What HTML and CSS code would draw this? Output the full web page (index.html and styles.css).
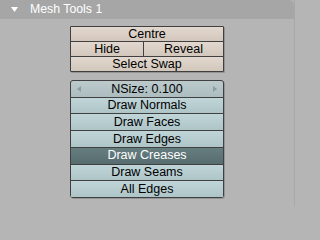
FILE: index.html
```html
<!DOCTYPE html>
<html>
<head>
<meta charset="utf-8">
<link rel="stylesheet" href="styles.css">
</head>
<body>
<div class="panel">
  <div class="header">
    <svg class="tri" width="7" height="5" viewBox="0 0 7 5"><polygon points="0,0 7,0 3.5,5" fill="#fff"/></svg>
    <span class="title">Mesh Tools 1</span>
  </div>
  <div class="content">
    <div class="group g1">
      <div class="row"><div class="btn beige">Centre</div></div>
      <div class="row split"><div class="btn beige">Hide</div><div class="btn beige">Reveal</div></div>
      <div class="row"><div class="btn beige">Select Swap</div></div>
    </div>
    <div class="group g2">
      <div class="row"><div class="btn num"><span class="arr l"></span>NSize: 0.100<span class="arr r"></span></div></div>
      <div class="row"><div class="btn blue">Draw Normals</div></div>
      <div class="row"><div class="btn blue">Draw Faces</div></div>
      <div class="row"><div class="btn blue">Draw Edges</div></div>
      <div class="row"><div class="btn dark">Draw Creases</div></div>
      <div class="row"><div class="btn blue">Draw Seams</div></div>
      <div class="row"><div class="btn blue">All Edges</div></div>
    </div>
  </div>
</div>
</body>
</html>
```
FILE: styles.css
```css
html, body {
  margin: 0;
  padding: 0;
  width: 295px;
  height: 207px;
  overflow: hidden;
  background: #b5b5b5;
  font-family: "Liberation Sans", Arial, sans-serif;
  font-size: 12.5px;
}
.panel {
  width: 294px;
  height: 207px;
  background: #b5b5b5;
  border-right: 1px solid #a8a8a8;
  display: flex;
  flex-direction: column;
}
.header {
  height: 19px;
  background: #a6a6a6;
  border-top-right-radius: 5px;
  display: flex;
  align-items: center;
  flex-shrink: 0;
}
.tri {
  margin-left: 11px;
  margin-top: -1px;
}
.title {
  color: #fff;
  margin-left: 12px;
  margin-top: -1px;
  font-size: 12.3px;
}
.content {
  padding-left: 70px;
  padding-top: 7px;
  display: flex;
  flex-direction: column;
  gap: 8px;
}
.group {
  width: 152px;
  border: 1px solid #404040;
  display: flex;
  flex-direction: column;
  box-shadow: 1px 1px 0 rgba(0,0,0,0.18);
  background: #404040;
  gap: 1px;
}
.g1 { height: 44px; border-radius: 1px; }
.g2 { height: 116px; border-radius: 3px; }
.row {
  flex: 1;
  display: flex;
  gap: 1px;
}
.split .btn:first-child { flex: 0 0 72px; }
.btn {
  flex: 1;
  display: flex;
  align-items: center;
  justify-content: center;
  color: #000;
  position: relative;
  line-height: 1;
}
.beige {
  background: linear-gradient(#e2d8cf, #d3c7bc);
}
.blue {
  background: linear-gradient(#c0d5d8, #aec5c8);
}
.dark {
  background: linear-gradient(#677e81, #566c6f);
  color: #fff;
}
.num {
  background: linear-gradient(#bccacc, #adbdbf);
  border-radius: 2px 2px 0 0;
}
.arr {
  position: absolute;
  top: 50%;
  margin-top: -3px;
  width: 0;
  height: 0;
  border-top: 3px solid transparent;
  border-bottom: 3px solid transparent;
}
.arr.l { left: 6px; border-right: 4px solid #8e9c9e; }
.arr.r { right: 6px; border-left: 4px solid #8e9c9e; }
```
